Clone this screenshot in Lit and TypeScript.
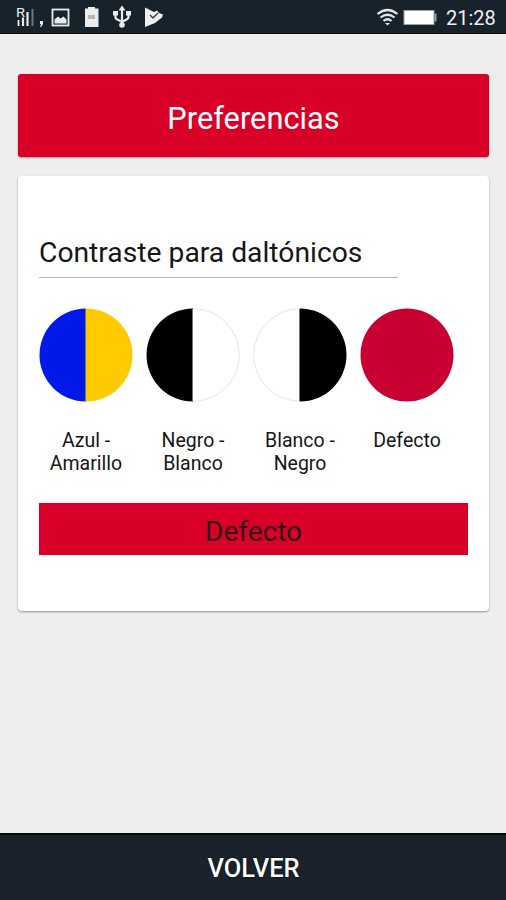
import { LitElement, html, css, svg } from "lit";
import { customElement } from "lit/decorators.js";

interface Contrast { name: string; left: string; right: string; kind: string; }

const CONTRASTS: Contrast[] = [
  { name: "Azul - Amarillo", left: "#0018e8", right: "#ffcb00", kind: "split" },
  { name: "Negro - Blanco", left: "#000", right: "#fff", kind: "split ringed" },
  { name: "Blanco - Negro", left: "#fff", right: "#000", kind: "split ringed" },
  { name: "Defecto", left: "#c80032", right: "#c80032", kind: "" },
];

@customElement("status-bar")
export class StatusBar extends LitElement {
  static styles = css`
    :host { display: block; height: 34px; background: #18222b; border-bottom: 1px solid #05090c; box-sizing: border-box; color: #eef0f1; }
    .bar { display: flex; height: 33px; align-items: flex-start; }
    svg { display: block; width: 170px; height: 33px; }
    .system { width: 62px; margin-left: 206px; }
    .clock { margin-left: 8px; font-size: 20px; line-height: 36px; white-space: nowrap; }
  `;
  render() {
    return html`<div class="bar">
      <svg viewBox="0 0 170 33" fill="none" stroke="#e9eced">
        <text x="16" y="17" font-size="13" fill="#e9eced" stroke="none" textLength="9" lengthAdjust="spacingAndGlyphs">R</text>
        <path d="M18.500 20v6" stroke-width="1.800"/><path d="M23 17.500v8.500M27.500 12v14" stroke-width="2.200"/><path d="M32.500 9v17" stroke-width="2" stroke="#6d767d"/>
        <path d="M40 21h3v3l-2 3h-1l1-3h-1z" fill="#e9eced" stroke="none"/>
        <rect x="52.5" y="9.500" width="16" height="16" stroke-width="1.800"/>
        <path d="M54.500 23.500v-4l3.500-3 2.500 2 3-2 3 3v4z" fill="#e9eced" stroke="none"/>
        <path d="M85 8.500h3V7h7v1.500h3.500V27H85z" fill="#eceeee" stroke="none"/>
        <rect x="88" y="15" width="7" height="4" fill="#b3b7b7" stroke="none"/>
        <g stroke-width="2.200"><path d="M122 9v16M115.500 13v4q0 2 2 2.500l4.500 2.500 4.500-2.500q2-.8 2-2.500v-4"/></g>
        <path d="M122 5.500l3.500 5h-7zM113 11h5v4.500h-5zM126 11h5v4.500h-5z" fill="#e9eced" stroke="none"/><circle cx="122" cy="25" r="2.800" fill="#e9eced" stroke="none"/>
        <path d="M145 7.500l9 4.500 3-1.500 2 2.500 4 1.500-1 3-7 5.500-10 4z" fill="#eef0f0" stroke="none"/><path d="M150 15l3 3 5-5" stroke="#39434b" stroke-width="1.500"/>
      </svg>
      <svg class="system" viewBox="376 0 62 33" fill="none" stroke="#e2e5e7">
        <path d="M377.500 14q10-8 20 0M380.500 17.500q7-5.500 14 0M383.500 21q4-3.500 8 0" stroke-width="2.200"/><path d="M385 23h5l-2.500 2.500z" fill="#e2e5e7" stroke="none"/>
        <rect x="404" y="10.500" width="30" height="14" fill="#fff" stroke="#9aa0a4"/><path d="M435.500 13.500v8" stroke="#9aa0a4" stroke-width="2"/>
      </svg>
      <span class="clock">21:28</span>
    </div>`;
  }
}

@customElement("contrast-option")
export class ContrastOption extends LitElement {
  static properties = { option: { attribute: false } };
  declare option: Contrast;
  static styles = css`
    :host { display: flex; flex-direction: column; align-items: center; width: 94px; }
    svg { display: block; width: 94px; height: 94px; }
    .ring { fill: none; stroke: #e4e4e4; stroke-width: 1; }
    .seam { stroke: #777; stroke-width: 1; }
    .label { margin-top: 27px; width: 88px; font-size: 19.500px; line-height: 23px; text-align: center; color: #161616; }
  `;
  render() {
    const o = this.option;
    const ringed = o.kind.includes("ringed");
    const sweep = o.left === "#fff" ? 0 : 1;
    return html`<svg viewBox="0 0 94 94">
        <path d="M47 .5A46.500 46.500 0 0 0 47 93.500z" fill=${o.left}/>
        <path d="M47 .5A46.500 46.500 0 0 1 47 93.500z" fill=${o.right}/>
        ${ringed ? svg`<path class="ring" d="M47 .7A46.300 46.300 0 0 ${sweep} 47 93.300"/>` : ""}
        ${o.kind ? svg`<path class="seam" d="M46.500 1v92"/>` : ""}
      </svg>
      <div class="label">${o.name}</div>`;
  }
}

@customElement("app-root")
export class AppRoot extends LitElement {
  static styles = css`
    :host { display: flex; flex-direction: column; height: 900px; background: #eee; font-family: Roboto, "Liberation Sans", sans-serif; color: #161616; }
    main { flex: 1; padding: 40px 17px 0 18px; }
    .title { height: 83px; line-height: 89px; border-radius: 3px; background: #d80027; color: #fff; text-align: center; font-size: 30.800px; box-shadow: 0 1px 2px #0005; }
    .card { margin-top: 19px; height: 435px; box-sizing: border-box; padding: 53px 21px 0; border-radius: 4px; background: #fff; box-shadow: 0 1px 2px #0006; }
    .heading { width: 359px; height: 49px; box-sizing: border-box; border-bottom: 1px solid #b5b5b5; font-size: 28.250px; line-height: 47px; white-space: nowrap; }
    .options { display: flex; gap: 13px; margin-top: 30px; height: 195px; }
    .current { height: 52px; line-height: 57px; text-align: center; font-size: 28px; background: #d80027; color: #30151a; }
    footer { height: 67px; box-sizing: border-box; border-top: 2px solid #06090c; background: #1a232c; color: #fff; text-align: center; line-height: 66px; font-size: 25.500px; font-weight: 500; padding-left: 1px; text-shadow: 0 0 2px #000; }
  `;
  render() {
    return html`<status-bar></status-bar>
      <main>
        <div class="title">Preferencias</div>
        <section class="card">
          <div class="heading">Contraste para daltónicos</div>
          <div class="options">${CONTRASTS.map((c) => html`<contrast-option .option=${c}></contrast-option>`)}</div>
          <div class="current">Defecto</div>
        </section>
      </main>
      <footer>VOLVER</footer>`;
  }
}
